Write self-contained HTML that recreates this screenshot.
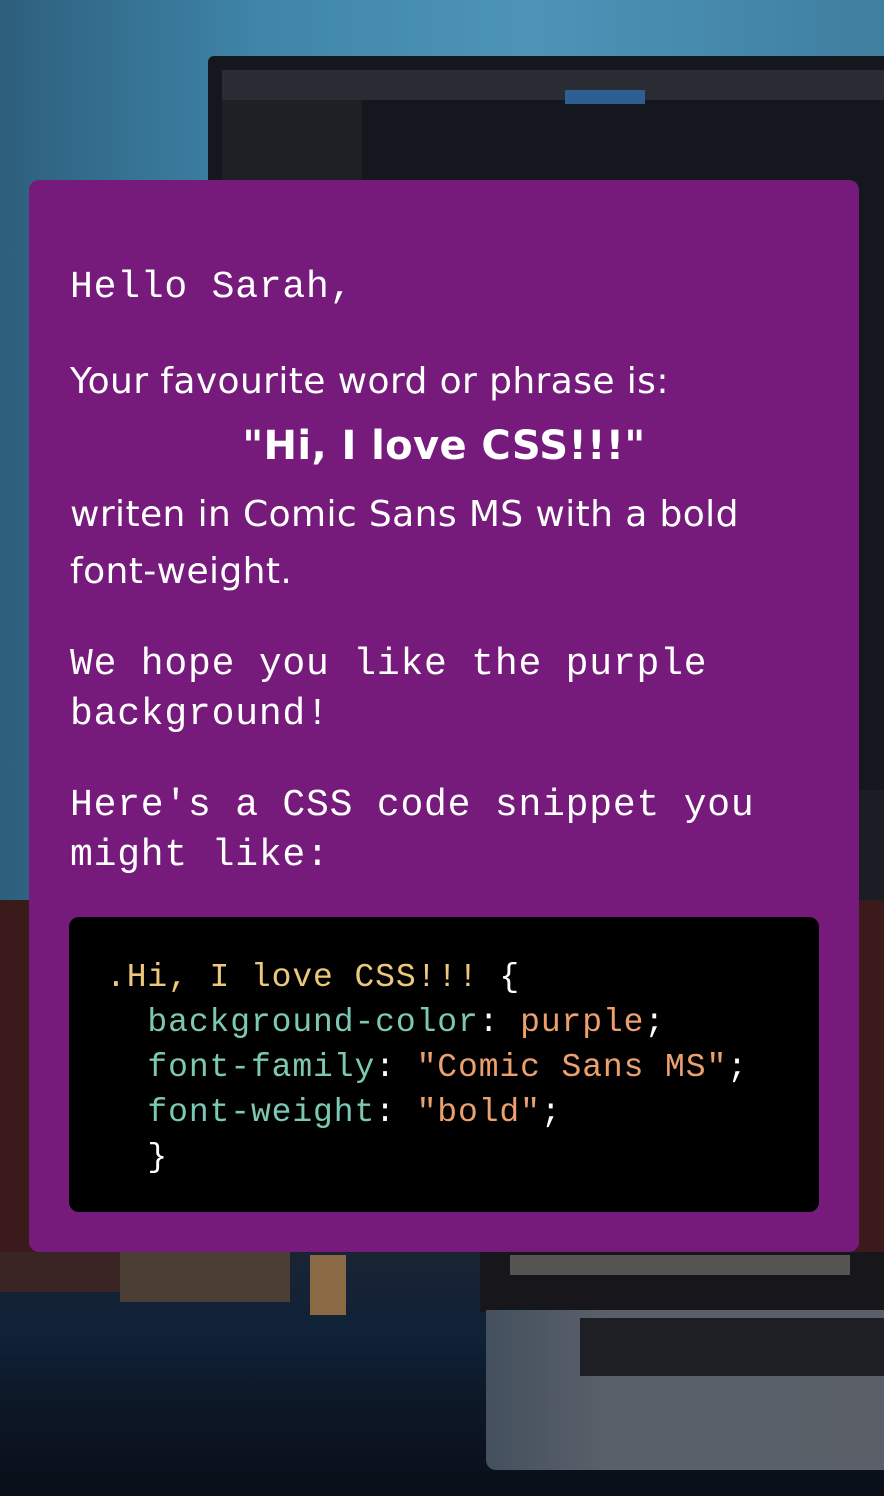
<!DOCTYPE html>
<html><head><meta charset="utf-8"><style>
html,body{margin:0;padding:0}
body{width:884px;height:1496px;position:relative;overflow:hidden;background:#0d1420}
.bg{position:absolute;inset:0}
.card{position:absolute;left:29px;top:180px;width:830px;height:1072px;background:#761a7b;border-radius:10px}
.mono{font-family:"Liberation Mono","DejaVu Sans Mono",monospace;color:#fff;font-size:38px;letter-spacing:0.8px;position:absolute;left:41px;margin:0;line-height:50px;white-space:pre}
.comic{font-family:"DejaVu Sans","Liberation Sans",sans-serif;color:#fff;font-size:36px;position:absolute;left:41px;margin:0;line-height:57px;letter-spacing:0.4px}
.code{position:absolute;left:40px;top:737px;width:750px;height:295px;background:#000;border-radius:10px}
.code pre{margin:0;position:absolute;left:37px;top:38px;font-family:"Liberation Mono","DejaVu Sans Mono",monospace;font-size:33px;line-height:45px;letter-spacing:0.9px;color:#fff}
.s{color:#ecc97a}.p{color:#7cc8b2}.v{color:#eba06d}
</style></head><body>
<div class="bg">
<div style="position:absolute;left:0;top:0;width:884px;height:900px;background:linear-gradient(90deg,#2d5f7c 0%,#3f86aa 30%,#4d94b8 60%,#3f7fa0 100%)"></div>
<div style="position:absolute;left:208px;top:56px;width:700px;height:740px;background:#15171f;border-radius:6px 0 0 0"></div>
<div style="position:absolute;left:222px;top:70px;width:680px;height:30px;background:#2a2c33"></div>
<div style="position:absolute;left:222px;top:100px;width:140px;height:90px;background:#1e2026"></div>
<div style="position:absolute;left:565px;top:90px;width:80px;height:14px;background:#2d5f93"></div>
<div style="position:absolute;left:855px;top:790px;width:40px;height:470px;background:#1b1d25"></div>
<div style="position:absolute;left:0;top:900px;width:884px;height:360px;background:#3a1a1a"></div>
<div style="position:absolute;left:0;top:1252px;width:884px;height:244px;background:linear-gradient(180deg,#1a2333 0%,#0f2238 35%,#0d1828 60%,#0a0f18 100%)"></div>
<div style="position:absolute;left:0;top:1252px;width:120px;height:40px;background:#3a2424"></div>
<div style="position:absolute;left:120px;top:1252px;width:170px;height:50px;background:#4a3e35"></div>
<div style="position:absolute;left:480px;top:1252px;width:404px;height:60px;background:#17161a"></div>
<div style="position:absolute;left:486px;top:1310px;width:398px;height:160px;background:linear-gradient(90deg,#44505e,#59606a 30%,#5b6068);border-radius:0 0 0 10px"></div>
<div style="position:absolute;left:580px;top:1318px;width:304px;height:58px;background:#1d1f24"></div>
<div style="position:absolute;left:510px;top:1255px;width:340px;height:20px;background:#565452"></div>
<div style="position:absolute;left:310px;top:1255px;width:36px;height:60px;background:#8a6a44"></div>
</div>
<div class="card">
<p class="mono" style="top:83px">Hello Sarah,</p>
<p class="comic" style="top:173px">Your favourite word or phrase is:</p>
<p class="comic" style="top:238px;left:0;width:830px;text-align:center;font-weight:bold;font-size:40px">"Hi, I love CSS!!!"</p>
<p class="comic" style="top:306px">writen in Comic Sans MS with a bold<br>font-weight.</p>
<p class="mono" style="top:460px">We hope you like the purple
background!</p>
<p class="mono" style="top:601px">Here's a CSS code snippet you
might like:</p>
<div class="code"><pre><span class="s">.Hi, I love CSS!!!</span> {
  <span class="p">background-color</span>: <span class="v">purple</span>;
  <span class="p">font-family</span>: <span class="v">"Comic Sans MS"</span>;
  <span class="p">font-weight</span>: <span class="v">"bold"</span>;
  }</pre></div>
</div>
</body></html>
